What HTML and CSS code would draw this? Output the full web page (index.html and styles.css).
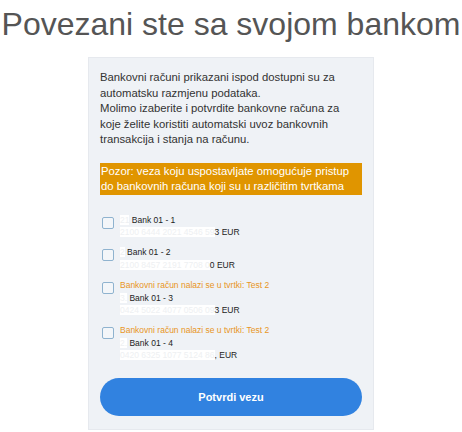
FILE: index.html
```html
<!DOCTYPE html>
<html>
<head>
<meta charset="utf-8">
<link rel="stylesheet" href="styles.css">
</head>
<body>
<h1 class="title">Povezani ste sa svojom bankom</h1>
<div class="card">
  <p class="intro">Bankovni računi prikazani ispod dostupni su za automatsku razmjenu podataka.<br>Molimo izaberite i potvrdite bankovne računa za koje želite koristiti automatski uvoz bankovnih transakcija i stanja na računu.</p>
  <p class="warning">Pozor: veza koju uspostavljate omogućuje pristup do bankovnih računa koji su u različitim tvrtkama</p>
  <ul class="accounts">
    <li class="account">
      <span class="check"></span>
      <div class="info">
        <div class="name"><span class="mask">21</span> Bank 01 - 1</div>
        <div class="number"><span class="mask">2100 6444 2021 4546 59</span>3 EUR</div>
      </div>
    </li>
    <li class="account">
      <span class="check"></span>
      <div class="info">
        <div class="name"><span class="mask">2</span> Bank 01 - 2</div>
        <div class="number"><span class="mask">2100 8457 2191 7708 0</span>0 EUR</div>
      </div>
    </li>
    <li class="account">
      <span class="check"></span>
      <div class="info">
        <div class="note">Bankovni račun nalazi se u tvrtki: Test 2</div>
        <div class="name"><span class="mask">3.</span> Bank 01 - 3</div>
        <div class="number"><span class="mask">0424 5022 4077 0506 09</span>3 EUR</div>
      </div>
    </li>
    <li class="account">
      <span class="check"></span>
      <div class="info">
        <div class="note">Bankovni račun nalazi se u tvrtki: Test 2</div>
        <div class="name"><span class="mask">2.</span> Bank 01 - 4</div>
        <div class="number"><span class="mask">0420 6325 1077 5124 86</span>, EUR</div>
      </div>
    </li>
  </ul>
  <button class="confirm">Potvrdi vezu</button>
</div>
</body>
</html>
```
FILE: styles.css
```css
html, body {
  margin: 0;
  padding: 0;
  background: #ffffff;
  font-family: "Liberation Sans", Arial, sans-serif;
}
.title {
  margin: 0;
  padding-top: 6px;
  text-align: center;
  font-weight: normal;
  font-size: 32px;
  line-height: 36px;
  color: #555555;
  white-space: nowrap;
}
.card {
  width: 262px;
  margin: 15px auto 0;
  padding: 12px 11px 13px 11px;
  background: #eff2f6;
  border: 1px solid #e6e9ee;
  display: flex;
  flex-direction: column;
}
.intro {
  margin: 0;
  font-size: 11.3px;
  line-height: 15.5px;
  color: #333333;
}
.warning {
  margin: 15px 0 0;
  padding: 1px 1px;
  background: #e09500;
  color: #ffffff;
  font-size: 11.3px;
  line-height: 15px;
}
.accounts {
  list-style: none;
  margin: 19px 0 0;
  padding: 0;
  display: flex;
  flex-direction: column;
  gap: 8px;
}
.account {
  display: flex;
  align-items: flex-start;
  gap: 6px;
}
.check {
  flex: none;
  width: 10px;
  height: 10px;
  margin-top: 3px;
  margin-left: 2px;
  border: 1px solid #8fb3cf;
  border-radius: 2px;
  background: #f3f6f9;
}
.info {
  display: flex;
  flex-direction: column;
  font-size: 8.5px;
  line-height: 12.4px;
  color: #222222;
}
.note {
  color: #e8951e;
}
.mask {
  background: #ffffff;
  color: #eef0f2;
}
.confirm {
  margin-top: 16px;
  height: 38px;
  border: none;
  border-radius: 19px;
  background: #3182e0;
  color: #ffffff;
  font-family: "Liberation Sans", Arial, sans-serif;
  font-weight: bold;
  font-size: 11px;
}
```
